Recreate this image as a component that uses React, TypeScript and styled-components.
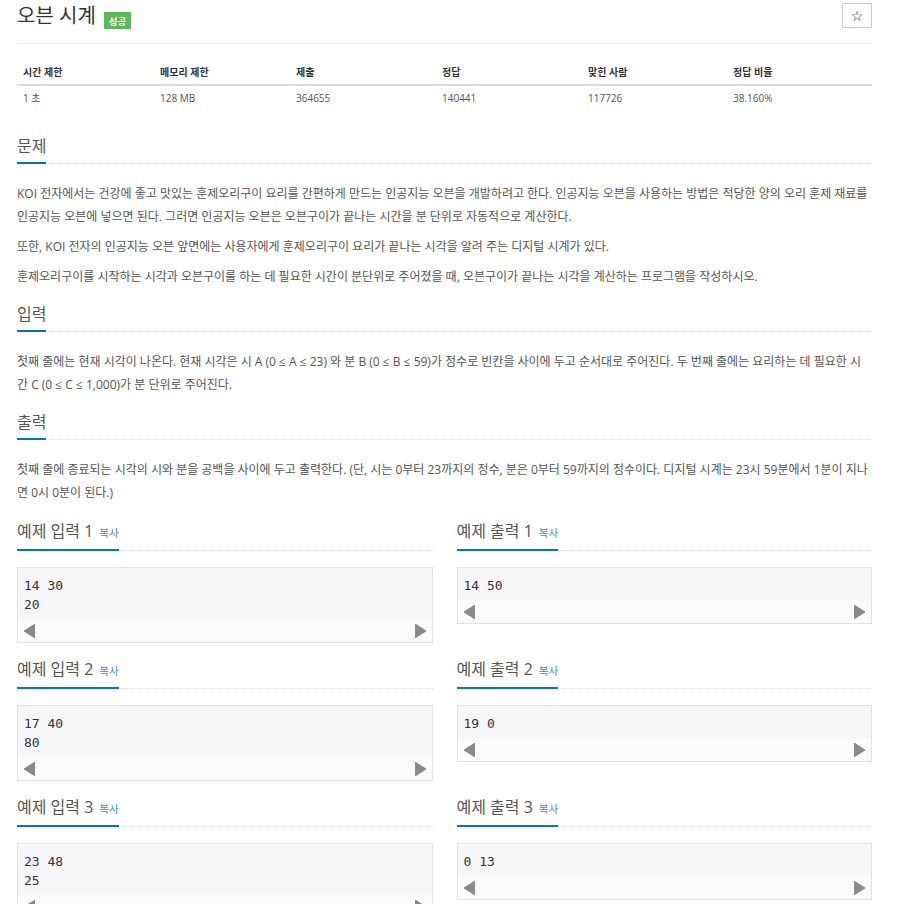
import styled, { createGlobalStyle } from "styled-components";

const GlobalStyle = createGlobalStyle`
  body {
    margin: 0;
    background: #fff;
    font-family: "Open Sans", "Noto Sans CJK KR", sans-serif;
    color: #555;
  }
`;

const Page = styled.div`
  width: 855px;
  margin-left: 17px;
`;

const Header = styled.div`
  display: flex;
  justify-content: space-between;
  align-items: flex-start;
  height: 43px;
  border-bottom: 1px solid #eee;
`;

const TitleRow = styled.div`
  display: flex;
  align-items: flex-start;
  gap: 8px;
`;

const Title = styled.h1`
  margin: 0;
  font-size: 20px;
  font-weight: 400;
  line-height: 32px;
  color: #333;
`;

const Badge = styled.span`
  margin-top: 12px;
  height: 17px;
  padding: 0 5px;
  display: flex;
  align-items: center;
  background: #5cb85c;
  color: #fff;
  font-size: 9.5px;
  font-weight: 700;
`;

const StarButton = styled.button`
  margin-top: 3px;
  width: 30px;
  height: 25px;
  padding: 0;
  border: 1px solid #ccc;
  background: #fff;
  color: #222;
  font: 14px "DejaVu Sans", sans-serif;
`;

const InfoTable = styled.table`
  width: 855px;
  margin-top: 14px;
  border-collapse: collapse;
  table-layout: fixed;
  font-size: 10px;
`;

const Th = styled.th<{ $w: number }>`
  width: ${(p) => p.$w - 12}px;
  padding: 7px 6px 5px;
  line-height: 14px;
  text-align: left;
  font-weight: 700;
  color: #333;
  border-bottom: 2px solid #ddd;
`;

const Td = styled.td`
  padding: 5px 6px;
  line-height: 14px;
  color: #555;
`;

const Section = styled.section<{ $top: number }>`
  margin-top: ${(p) => p.$top}px;
`;

const HeadlineBar = styled.div`
  display: flex;
  border-bottom: 1px dotted #ddd;
`;

const Headline = styled.h2`
  margin: 0 0 -1px;
  padding-bottom: 4px;
  font-size: 16px;
  font-weight: 400;
  line-height: 24px;
  color: #555;
  border-bottom: 2px solid #0076c0;
`;

const CopyLink = styled.span`
  margin-left: 6px;
  font-size: 10.5px;
  color: #428bca;
`;

const Body = styled.div`
  padding-top: 18px;
  font-size: 12px;
  line-height: 23px;
  p {
    margin: 0 0 7px;
  }
`;

const SampleGrid = styled.div`
  margin-top: 15px;
  display: grid;
  grid-template-columns: 1fr 1fr;
  column-gap: 24px;
  row-gap: 14px;
  align-items: start;
`;

const SampleBox = styled.div`
  margin-top: 16px;
  border: 1px solid #e1e1e8;
  background: #f7f7f9;
`;

const SamplePre = styled.pre`
  margin: 0;
  padding: 8px 6px 5px;
  font: 13px/19px "DejaVu Sans Mono", monospace;
  color: #333;
`;

const ScrollTrack = styled.div`
  height: 23px;
  padding: 0 6px;
  display: flex;
  justify-content: space-between;
  align-items: center;
  background: #fbfbfb;
`;

const Arrow = ({ right }: { right?: boolean }) => (
  <svg width="11" height="14" viewBox="0 0 11 14">
    <polygon
      points={right ? "0,0 11,7 0,14" : "11,0 0,7 11,14"}
      fill="#8a8a8a"
      stroke="#8a8a8a"
      strokeLinejoin="round"
      strokeWidth="1"
    />
  </svg>
);

const columns = [
  { label: "시간 제한", value: "1 초", w: 137 },
  { label: "메모리 제한", value: "128 MB", w: 136 },
  { label: "제출", value: "364655", w: 146 },
  { label: "정답", value: "140441", w: 146 },
  { label: "맞힌 사람", value: "117726", w: 145 },
  { label: "정답 비율", value: "38.160%", w: 145 },
];

const samples = [
  { title: "예제 입력 1", text: "14 30\n20" },
  { title: "예제 출력 1", text: "14 50" },
  { title: "예제 입력 2", text: "17 40\n80" },
  { title: "예제 출력 2", text: "19 0" },
  { title: "예제 입력 3", text: "23 48\n25" },
  { title: "예제 출력 3", text: "0 13" },
];

function App() {
  return (
    <Page>
      <GlobalStyle />
      <Header>
        <TitleRow>
          <Title>오븐 시계</Title>
          <Badge>성공</Badge>
        </TitleRow>
        <StarButton>☆</StarButton>
      </Header>

      <InfoTable>
        <thead>
          <tr>
            {columns.map((c) => (
              <Th key={c.label} $w={c.w}>
                {c.label}
              </Th>
            ))}
          </tr>
        </thead>
        <tbody>
          <tr>
            {columns.map((c) => (
              <Td key={c.label}>{c.value}</Td>
            ))}
          </tr>
        </tbody>
      </InfoTable>

      <Section $top={24}>
        <HeadlineBar>
          <Headline>문제</Headline>
        </HeadlineBar>
        <Body>
          <p>
            KOI 전자에서는 건강에 좋고 맛있는 훈제오리구이 요리를 간편하게 만드는 인공지능 오븐을 개발하려고 한다. 인공지능 오븐을 사용하는 방법은 적당한 양의 오리 훈제 재료를 인공지능 오븐에 넣으면 된다. 그러면 인공지능 오븐은 오븐구이가 끝나는 시간을 분 단위로 자동적으로 계산한다.
          </p>
          <p>또한, KOI 전자의 인공지능 오븐 앞면에는 사용자에게 훈제오리구이 요리가 끝나는 시각을 알려 주는 디지털 시계가 있다.</p>
          <p>훈제오리구이를 시작하는 시각과 오븐구이를 하는 데 필요한 시간이 분단위로 주어졌을 때, 오븐구이가 끝나는 시각을 계산하는 프로그램을 작성하시오.</p>
        </Body>
      </Section>

      <Section $top={14}>
        <HeadlineBar>
          <Headline>입력</Headline>
        </HeadlineBar>
        <Body>
          <p>
            첫째 줄에는 현재 시각이 나온다. 현재 시각은 시 A (0 ≤ A ≤ 23) 와 분 B (0 ≤ B ≤ 59)가 정수로 빈칸을 사이에 두고 순서대로 주어진다. 두 번째 줄에는 요리하는 데 필요한 시간 C (0 ≤ C ≤ 1,000)가 분 단위로 주어진다.
          </p>
        </Body>
      </Section>

      <Section $top={14}>
        <HeadlineBar>
          <Headline>출력</Headline>
        </HeadlineBar>
        <Body>
          <p>
            첫째 줄에 종료되는 시각의 시와 분을 공백을 사이에 두고 출력한다. (단, 시는 0부터 23까지의 정수, 분은 0부터 59까지의 정수이다. 디지털 시계는 23시 59분에서 1분이 지나면 0시 0분이 된다.)
          </p>
        </Body>
      </Section>

      <SampleGrid>
        {samples.map((s) => (
          <div key={s.title}>
            <HeadlineBar>
              <Headline>
                {s.title}
                <CopyLink>복사</CopyLink>
              </Headline>
            </HeadlineBar>
            <SampleBox>
              <SamplePre>{s.text}</SamplePre>
              <ScrollTrack>
                <Arrow />
                <Arrow right />
              </ScrollTrack>
            </SampleBox>
          </div>
        ))}
      </SampleGrid>
    </Page>
  );
}

export default App;
